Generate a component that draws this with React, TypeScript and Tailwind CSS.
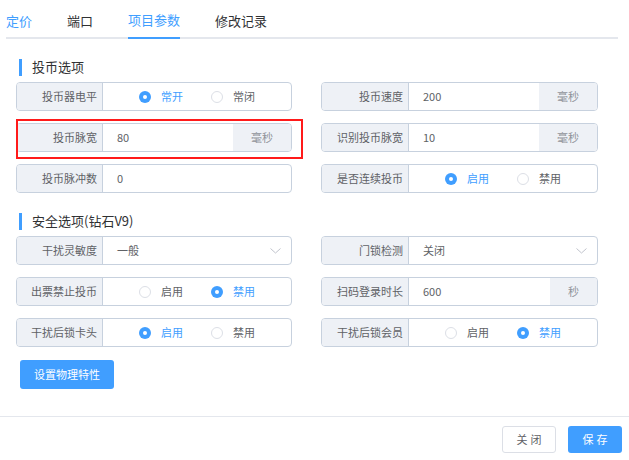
import React from "react";

const font = { fontFamily: '"Noto Sans CJK SC", "Noto Sans", sans-serif' };

const Radio = ({ label, checked }: { label: string; checked?: boolean }) => (
  <div className="flex items-center gap-[10px]">
    {checked ? (
      <span className="w-[12px] h-[12px] rounded-full bg-[#409eff] flex items-center justify-center">
        <span className="w-[4px] h-[4px] rounded-full bg-white" />
      </span>
    ) : (
      <span className="w-[12px] h-[12px] rounded-full border border-[#dcdfe6] bg-white" />
    )}
    <span className={`text-[11px] ${checked ? "text-[#409eff]" : "text-[#606266]"}`}>{label}</span>
  </div>
);

const Label = ({ text, w }: { text: string; w: string }) => (
  <div className={`${w} shrink-0 h-full bg-[#eef1f6] border-r border-[#c7d1de] flex items-center justify-end pr-[5px] text-[11px] text-[#606266]`}>
    {text}
  </div>
);

const Row = ({
  label,
  right,
  children,
}: {
  label: string;
  right?: boolean;
  children: React.ReactNode;
}) => (
  <div className="h-[29px] border border-[#c7d1de] rounded-[4px] flex overflow-hidden bg-white">
    <Label text={label} w={right ? "w-[87px]" : "w-[86px]"} />
    {children}
  </div>
);

const InputUnit = ({ value, unit, unitW = "w-[58px]" }: { value: string; unit?: string; unitW?: string }) => (
  <>
    <div className="flex-1 flex items-center pl-[14px] text-[11px] text-[#606266]">{value}</div>
    {unit && (
      <div className={`${unitW} h-full bg-[#eef1f6] flex items-center justify-center text-[11px] text-[#909399]`}>
        {unit}
      </div>
    )}
  </>
);

const Radios = ({ a, b, first }: { a: string; b: string; first: boolean }) => (
  <div className="flex-1 flex items-center justify-center gap-[28px]">
    <Radio label={a} checked={first} />
    <Radio label={b} checked={!first} />
  </div>
);

const Select = ({ value }: { value: string }) => (
  <div className="flex-1 flex items-center justify-between pl-[14px] pr-[10px] text-[11px] text-[#606266]">
    <span>{value}</span>
    <svg width="11" height="6" viewBox="0 0 11 6" fill="none">
      <path d="M0.5 0.5L5.5 5L10.5 0.5" stroke="#c0c4cc" strokeWidth="1" />
    </svg>
  </div>
);

const SectionTitle = ({ text }: { text: string }) => (
  <div className="flex items-center h-[18px] pl-[3px]">
    <span className="w-[3px] h-[17px] bg-[#409eff]" />
    <span className="ml-[10px] text-[13px] text-[#303133]">{text}</span>
  </div>
);

export default function App() {
  const tabs = ["定价", "端口", "项目参数", "修改记录"];
  return (
    <div className="w-[629px] h-[460px] bg-white flex flex-col" style={font}>
      {/* tabs */}
      <div className="mx-[6px] w-[612px] h-[39px] border-b-2 border-[#e4e7ed] flex gap-[35px]">
        {tabs.map((t, i) => (
          <div
            key={t}
            className={`h-[39px] -mb-[2px] pt-[3px] flex items-center text-[13px] ${
              i === 2 ? "text-[#409eff] border-b-2 border-[#409eff]" : i === 0 ? "text-[#409eff]" : "text-[#303133]"
            }`}
          >
            {t}
          </div>
        ))}
      </div>

      <div className="px-[16px]">
        <div className="mt-[19px]">
          <SectionTitle text="投币选项" />
        </div>
        <div className="mt-[6px] grid grid-cols-[276px_277px] gap-x-[29px] gap-y-[12px]">
          <Row label="投币器电平">
            <Radios a="常开" b="常闭" first />
          </Row>
          <Row label="投币速度" right>
            <InputUnit value="200" unit="毫秒" />
          </Row>
          <div className="relative">
            <Row label="投币脉宽">
              <InputUnit value="80" unit="毫秒" />
            </Row>
            <div className="absolute left-0 top-[-4px] w-[287px] h-[40px] border-2 border-[#ff1a1a] pointer-events-none" />
          </div>
          <Row label="识别投币脉宽" right>
            <InputUnit value="10" unit="毫秒" />
          </Row>
          <Row label="投币脉冲数">
            <InputUnit value="0" />
          </Row>
          <Row label="是否连续投币" right>
            <Radios a="启用" b="禁用" first />
          </Row>
        </div>

        <div className="mt-[19px]">
          <SectionTitle text="安全选项(钻石V9)" />
        </div>
        <div className="mt-[6px] grid grid-cols-[276px_277px] gap-x-[29px] gap-y-[12px]">
          <Row label="干扰灵敏度">
            <Select value="一般" />
          </Row>
          <Row label="门锁检测" right>
            <Select value="关闭" />
          </Row>
          <Row label="出票禁止投币">
            <Radios a="启用" b="禁用" first={false} />
          </Row>
          <Row label="扫码登录时长" right>
            <InputUnit value="600" unit="秒" unitW="w-[47px]" />
          </Row>
          <Row label="干扰后锁卡头">
            <Radios a="启用" b="禁用" first />
          </Row>
          <Row label="干扰后锁会员" right>
            <Radios a="启用" b="禁用" first={false} />
          </Row>
        </div>

        <button className="mt-[13px] ml-[4px] w-[94px] h-[29px] rounded-[3px] bg-[#409eff] text-white text-[11px] flex items-center justify-center">
          设置物理特性
        </button>
      </div>

      <div className="mt-[27px] border-t border-[#e4e7ed] flex justify-end gap-[12px] pr-[7px] pt-[9px]">
        <button className="w-[54px] h-[27px] rounded-[3px] border border-[#dcdfe6] bg-white text-[11px] text-[#606266] tracking-[3px] pl-[3px]">
          关闭
        </button>
        <button className="w-[54px] h-[27px] rounded-[3px] bg-[#409eff] text-white text-[11px] tracking-[3px] pl-[3px]">
          保存
        </button>
      </div>
    </div>
  );
}
